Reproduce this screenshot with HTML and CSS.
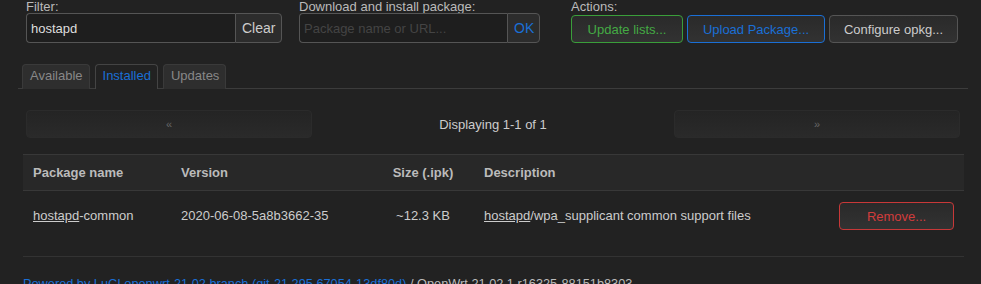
FILE: index.html
```html
<html>
<head>
<meta name="viewport" content="width=device-width, initial-scale=1.0">
<link rel="stylesheet" href="styles.css">
</head>
<body>
<div class="page">

	<div class="controls">
		<div class="ctl">
			<label>Filter:</label>
			<div class="group filter">
				<input type="text" value="hostapd">
				<button class="addon">Clear</button>
			</div>
		</div>
		<div class="ctl">
			<label>Download and install package:</label>
			<div class="group download">
				<input type="text" placeholder="Package name or URL...">
				<button class="addon ok">OK</button>
			</div>
		</div>
		<div class="ctl">
			<label>Actions:</label>
			<div class="actions">
				<button class="btn green">Update lists...</button>
				<button class="btn blue">Upload Package...</button>
				<button class="btn">Configure opkg...</button>
			</div>
		</div>
	</div>

	<ul class="tabs">
		<li>Available</li>
		<li class="active">Installed</li>
		<li>Updates</li>
	</ul>

	<div class="pager">
		<div class="pgbtn">&laquo;</div>
		<div class="pginfo">Displaying 1-1 of 1</div>
		<div class="pgbtn">&raquo;</div>
	</div>

	<table class="pkgs">
		<tr>
			<th class="c-name">Package name</th>
			<th class="c-ver">Version</th>
			<th class="c-size">Size (.ipk)</th>
			<th class="c-desc">Description</th>
			<th class="c-act"></th>
		</tr>
		<tr>
			<td><span class="u">hostapd</span>-common</td>
			<td>2020-06-08-5a8b3662-35</td>
			<td class="c-size">~12.3 KB</td>
			<td><span class="u">hostapd</span>/wpa_supplicant common support files</td>
			<td class="c-act"><button class="btn red">Remove...</button></td>
		</tr>
	</table>

	<footer><a href="#">Powered by LuCI openwrt-21.02 branch (git-21.295.67054-13df80d)</a> / OpenWrt 21.02.1 r16325-88151b8303</footer>

</div>
</body>
</html>
```

FILE: styles.css
```css
body {
	margin: 0;
	background: #222;
	color: #ccc;
	font-family: "Liberation Sans", Arial, Helvetica, sans-serif;
	font-size: 13px;
	overflow: hidden;
}

.page {
	width: 950px;
	margin-left: 18px;
}

/* top controls */
.controls {
	display: flex;
	padding-left: 8px;
}
.ctl label {
	display: block;
	height: 13px;
	line-height: 13px;
	color: #bbb;
}
.ctl:nth-child(1) { width: 273px; }
.ctl:nth-child(2) { width: 272px; }

.group {
	display: flex;
	height: 30px;
}
.group input {
	box-sizing: border-box;
	height: 30px;
	background: #1e1e1e;
	border: 1px solid #555;
	border-right: none;
	border-radius: 4px 0 0 4px;
	color: #ddd;
	font: inherit;
	padding: 0 4px;
	outline: none;
}
.group input::placeholder { color: #444; }
.filter input { width: 209px; }
.download input { width: 208px; }

.addon {
	box-sizing: border-box;
	height: 30px;
	background: #2c2c2c;
	border: 1px solid #555;
	border-radius: 0 4px 4px 0;
	color: #ccc;
	font: inherit;
	font-size: 14px;
	padding: 0 6px;
}
.filter .addon { width: 47px; }
.addon.ok {
	width: 33px;
	color: #1a6fd6;
}

.actions {
	display: flex;
	gap: 4px;
	height: 30px;
	align-items: flex-end;
}
.btn {
	box-sizing: border-box;
	height: 28px;
	background: linear-gradient(#2a2a2a, #323232);
	border: 1px solid #555;
	border-radius: 4px;
	color: #ccc;
	font-family: "Liberation Sans", Arial, Helvetica, sans-serif;
	font-size: 13px;
	padding: 0 10px;
}
.btn.green { border-color: #3a9e3a; color: #44aa44; width: 112px; }
.btn.blue { border-color: #1a6fd6; color: #1a6fd6; width: 138px; }
.actions .btn:nth-child(3) { width: 129px; }
.btn.red { border-color: #c83838; color: #d23c3c; width: 115px; vertical-align: top; }

/* tabs */
.tabs {
	list-style: none;
	margin: 21px 0 0 0;
	padding: 0 0 0 4px;
	display: flex;
	gap: 5px;
	border-bottom: 1px solid #3c3c3c;
	height: 24px;
}
.tabs li {
	box-sizing: border-box;
	height: 25px;
	line-height: 22px;
	padding: 0 6px 0 7px;
	background: #2e2e2e;
	border: 1px solid #3a3a3a;
	border-bottom: none;
	border-radius: 4px 4px 0 0;
	color: #888;
}
.tabs li.active {
	background: #222;
	color: #1a6fd6;
	border-color: #444;
}

/* pager */
.pager {
	display: flex;
	align-items: center;
	margin: 21px 0 0 8px;
	width: 934px;
}
.pgbtn {
	box-sizing: border-box;
	width: 286px;
	height: 28px;
	line-height: 26px;
	text-align: center;
	background: linear-gradient(#242424, #2a2a2a);
	border: 1px solid #2b2b2b;
	border-radius: 4px;
	color: #666;
	font-size: 11px;
}
.pginfo {
	flex: 1;
	text-align: center;
	color: #ccc;
}

/* table */
.pkgs {
	margin: 16px 0 0 5px;
	width: 941px;
	border-collapse: collapse;
	font-size: 13px;
}
.pkgs th {
	height: 36px;
	background: #282828;
	border-top: 1px solid #383838;
	border-bottom: 1px solid #383838;
	color: #bbb;
	font-weight: bold;
	text-align: left;
	padding: 0 10px;
}
.pkgs td {
	box-sizing: border-box;
	height: 66px;
	vertical-align: top;
	line-height: 28px;
	border-bottom: 1px solid #333;
	padding: 11px 10px 26px 10px;
	color: #ccc;
}
.c-name { width: 128px; }
.c-ver { width: 181px; }
.pkgs .c-size { width: 82px; text-align: center; }
.pkgs .c-act { width: 123px; text-align: right; }
.u { text-decoration: underline; }

footer {
	margin: 19px 0 0 5px;
	color: #bbb;
	font-size: 12.75px;
	white-space: nowrap;
}
footer a {
	color: #1a6fd6;
	text-decoration: none;
}
```
